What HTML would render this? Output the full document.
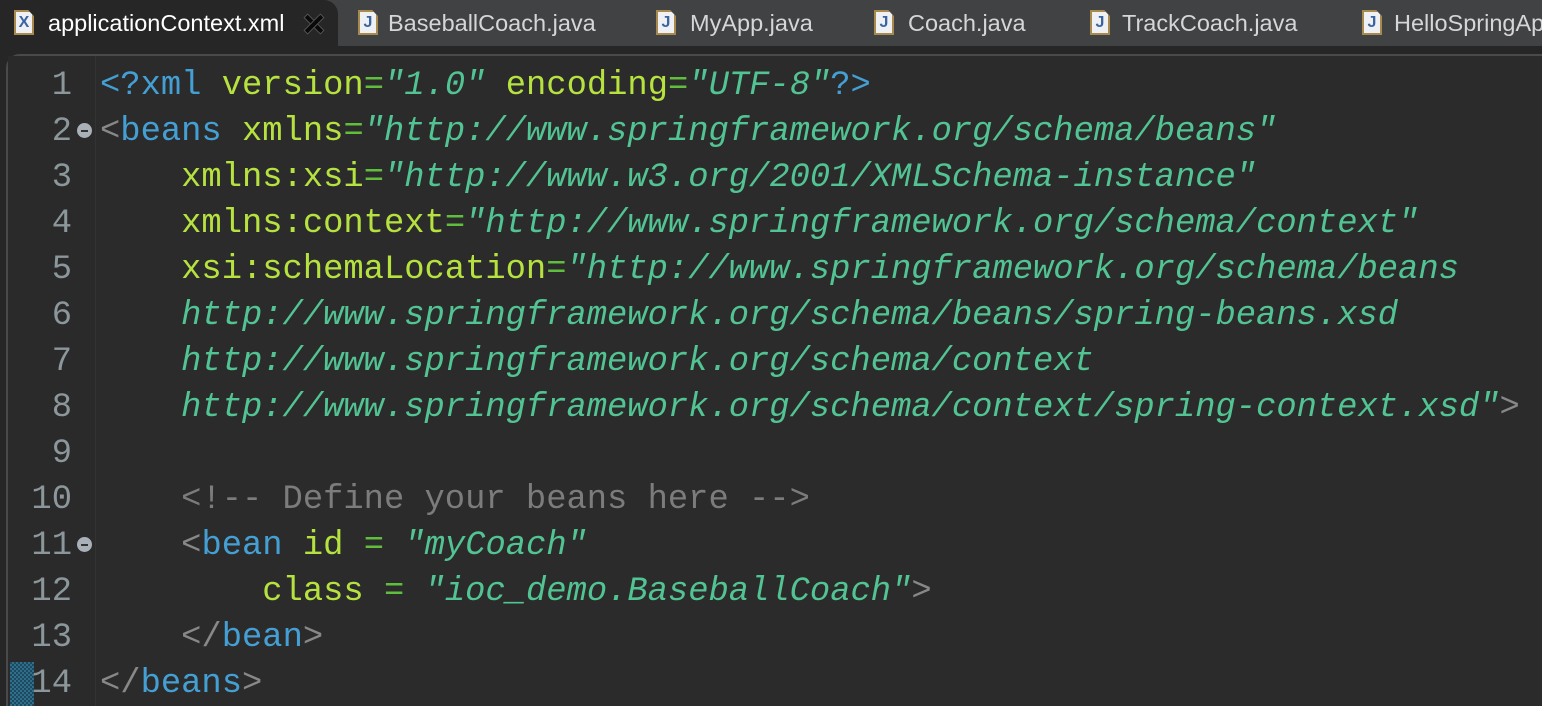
<!DOCTYPE html>
<html style="overflow:hidden;height:706px"><head><meta charset="utf-8"><style>
body{margin:0;width:1542px;height:706px;overflow:hidden;background:#262626;position:relative;font-family:"Liberation Sans",sans-serif}
#tabs{position:absolute;left:0;top:0;width:1542px;height:46px;background:#414244;overflow:hidden}
.tab{position:absolute;top:0;height:46px;color:#d6d6d6;font-size:23.5px;line-height:46px;white-space:nowrap}
.act{left:0;width:338px;background:#262626;border-radius:0 14px 0 0;color:#fff}
.ic{position:absolute;top:10px;width:20px;height:25px;background:#eef0f4;border:2px solid #a88a4e;box-sizing:border-box;font:bold 16px "Liberation Sans",sans-serif;color:#3a64a0;text-align:center;line-height:22px;clip-path:polygon(0 0,70% 0,100% 25%,100% 100%,0 100%)}
.lbl{position:absolute;top:0}
#ed{position:absolute;left:6px;top:54px;width:1560px;height:660px;background:#2b2b2b;border:2px solid #4a4a4c;border-radius:14px 0 0 0;box-sizing:border-box}
#gut{position:absolute;left:8px;top:56px;width:87px;height:650px;background:#2a2a2a;border-right:1px solid #333}
.ln{position:absolute;left:0;width:72px;text-align:right;font:33.8px "Liberation Mono",monospace;color:#8b979b;height:46px;line-height:46px}
.code{position:absolute;left:100px;font:33.8px "Liberation Mono",monospace;white-space:pre;height:46px;line-height:46px;color:#ccc}
.b{color:#44a0d4}.g{color:#888}.a{color:#b6e240}.e{color:#5fbe3c}.s{color:#52c493;font-style:italic}.c{color:#7c7c7c}
.fold{position:absolute;left:77px;width:15px;height:15px;border-radius:50%;background:#aab0b8}
.fold:after{content:"";position:absolute;left:4px;top:6.5px;width:7px;height:2px;background:#333}
.x{position:absolute;left:304px;top:14px;width:20px;height:20px}
.x:before,.x:after{content:"";position:absolute;left:-2px;top:7px;width:24px;height:6px;background:#0a0a0a;border:1px solid #555;box-sizing:border-box;transform:rotate(45deg)}
.x:after{transform:rotate(-45deg)}
</style></head><body>
<div id="tabs">
<div class="tab act"><div class="ic" style="left:14px">X</div><span class="lbl" style="left:48px">applicationContext.xml</span><div class="x"></div></div>
<div class="tab" style="left:356px"><div class="ic" style="left:2px">J</div><span class="lbl" style="left:32px">BaseballCoach.java</span></div>
<div class="tab" style="left:656px"><div class="ic" style="left:0">J</div><span class="lbl" style="left:34px">MyApp.java</span></div>
<div class="tab" style="left:874px"><div class="ic" style="left:0">J</div><span class="lbl" style="left:34px">Coach.java</span></div>
<div class="tab" style="left:1090px"><div class="ic" style="left:0">J</div><span class="lbl" style="left:32px">TrackCoach.java</span></div>
<div class="tab" style="left:1362px"><div class="ic" style="left:0">J</div><span class="lbl" style="left:32px">HelloSpringApp.java</span></div>
</div>
<div id="ed"></div>
<div id="gut"></div>
<div style="position:absolute;left:10px;top:662px;width:24px;height:44px;background:repeating-conic-gradient(#2f6f8c 0 25%,#1d4a5e 0 50%) 0 0/4px 4px"></div>
<div class="ln" style="top:63px">1</div>
<div class="ln" style="top:109px">2</div>
<div class="ln" style="top:155px">3</div>
<div class="ln" style="top:201px">4</div>
<div class="ln" style="top:247px">5</div>
<div class="ln" style="top:293px">6</div>
<div class="ln" style="top:339px">7</div>
<div class="ln" style="top:385px">8</div>
<div class="ln" style="top:431px">9</div>
<div class="ln" style="top:477px">10</div>
<div class="ln" style="top:523px">11</div>
<div class="ln" style="top:569px">12</div>
<div class="ln" style="top:615px">13</div>
<div class="ln" style="top:661px">14</div>
<div class="fold" style="top:123px"></div>
<div class="fold" style="top:537px"></div>
<div class="code" style="top:63px"><span class="b">&lt;?xml</span> <span class="a">version</span><span class="e">=</span><span class="s">"1.0"</span> <span class="a">encoding</span><span class="e">=</span><span class="s">"UTF-8"</span><span class="b">?&gt;</span></div>
<div class="code" style="top:109px"><span class="g">&lt;</span><span class="b">beans</span> <span class="a">xmlns</span><span class="e">=</span><span class="s">"http://www.springframework.org/schema/beans"</span></div>
<div class="code" style="top:155px">    <span class="a">xmlns:xsi</span><span class="e">=</span><span class="s">"http://www.w3.org/2001/XMLSchema-instance"</span></div>
<div class="code" style="top:201px">    <span class="a">xmlns:context</span><span class="e">=</span><span class="s">"http://www.springframework.org/schema/context"</span></div>
<div class="code" style="top:247px">    <span class="a">xsi:schemaLocation</span><span class="e">=</span><span class="s">"http://www.springframework.org/schema/beans</span></div>
<div class="code" style="top:293px">    <span class="s">http://www.springframework.org/schema/beans/spring-beans.xsd</span></div>
<div class="code" style="top:339px">    <span class="s">http://www.springframework.org/schema/context</span></div>
<div class="code" style="top:385px">    <span class="s">http://www.springframework.org/schema/context/spring-context.xsd"</span><span class="g">&gt;</span></div>
<div class="code" style="top:477px">    <span class="c">&lt;!-- Define your beans here --&gt;</span></div>
<div class="code" style="top:523px">    <span class="g">&lt;</span><span class="b">bean</span> <span class="a">id</span> <span class="e">=</span> <span class="s">"myCoach"</span></div>
<div class="code" style="top:569px">        <span class="a">class</span> <span class="e">=</span> <span class="s">"ioc_demo.BaseballCoach"</span><span class="g">&gt;</span></div>
<div class="code" style="top:615px">    <span class="g">&lt;/</span><span class="b">bean</span><span class="g">&gt;</span></div>
<div class="code" style="top:661px"><span class="g">&lt;/</span><span class="b">beans</span><span class="g">&gt;</span></div>
</body></html>
